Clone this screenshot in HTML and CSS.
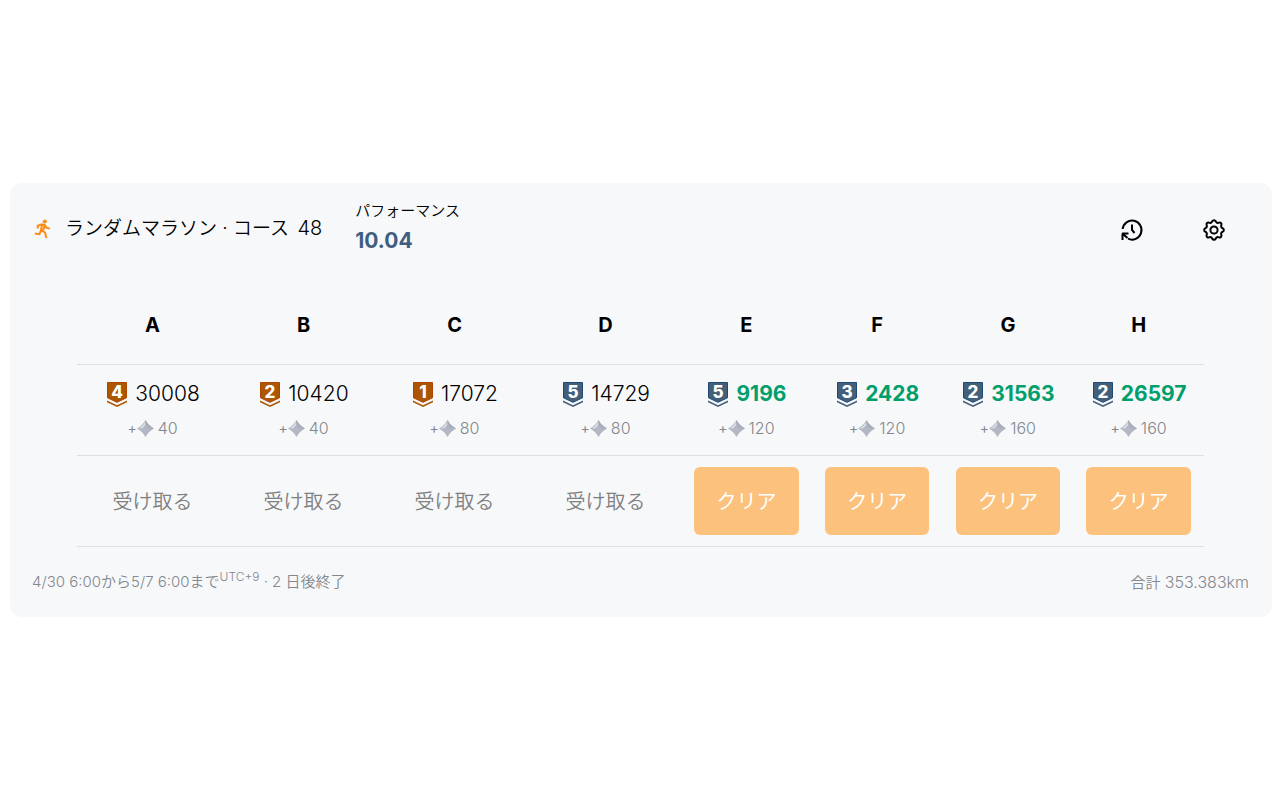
FILE: index.html
```html
<!DOCTYPE html>
<html lang="ja">
<head>
<meta charset="utf-8">
<meta name="viewport" content="width=device-width, initial-scale=1">
<title>ランダムマラソン</title>
<link rel="stylesheet" href="styles.css">
</head>
<body>
<svg class="defs" aria-hidden="true">
  <symbol id="shield" viewBox="0 0 20 25">
    <path class="shield-face" d="M.5 .5h19v15.300L10 20.300.5 15.800z"/>
    <path class="shield-chevron" d="M0 18.600l10 4.600 10-4.600v1.700L10 25 0 20.300z"/>
  </symbol>
  <symbol id="shard" viewBox="0 0 16 16">
    <path d="M8 0Q10.800 5.200 16 8 10.800 10.800 8 16 5.200 10.800 0 8 5.200 5.200 8 0z" fill="#b2b7c3"/>
    <path d="M7.500 2Q5.300 5.900 1.500 8L5 7.800 8 4.500z" fill="#dcdfe4"/>
    <path d="M8 0L8 5 11 8 16 8Q10.800 5.200 8 0z" fill="#a8adbb"/>
  </symbol>
</svg>
<main class="card">
  <header class="top">
    <h1 class="title">
      <svg class="runner" viewBox="0 0 18 20" aria-hidden="true">
        <circle cx="10.800" cy="2.400" r="2"/>
        <path d="M3.800 9.500V6.800L8 5.300l3 .7 1.300 2.600 3.600 1M8.200 6L7 10.800l4 2.700 1.400 5.500M7 11.300L5.400 15.200 .8 14.500M10.800 6.500L9.300 11"/>
      </svg>
      <span>ランダムマラソン · コース <span class="course">48</span></span>
    </h1>
    <div class="performance">
      <span class="label">パフォーマンス</span>
      <strong class="score">10.04</strong>
    </div>
    <nav class="tools">
      <button type="button" class="tool" aria-label="履歴">
        <svg viewBox="0 0 24 24"><path d="M2.600 11A9.500 9.500 0 1 1 8 20.700M12 6.500V12l2.500 3"/><path d="M2 15.500h6.500M2.500 15.500v6.500M3 16l4.500 4"/></svg>
      </button>
      <button type="button" class="tool" aria-label="設定">
        <svg viewBox="0 0 24 24"><path d="M10.300 3.200C11 1.800 13 1.800 13.700 3.200 14.300 4.800 15.600 5.300 17 4.600 18.500 4.100 19.900 5.500 19.400 7 18.700 8.400 19.200 9.700 20.800 10.300 22.200 11 22.200 13 20.800 13.700 19.200 14.300 18.700 15.600 19.400 17 19.900 18.500 18.500 19.900 17 19.400 15.600 18.700 14.300 19.200 13.700 20.800 13 22.200 11 22.200 10.300 20.800 9.700 19.200 8.400 18.700 7 19.400 5.500 19.900 4.100 18.500 4.600 17 5.300 15.600 4.800 14.300 3.200 13.700 1.800 13 1.800 11 3.200 10.300 4.800 9.700 5.300 8.400 4.600 7 4.100 5.500 5.500 4.100 7 4.600 8.400 5.300 9.700 4.800 10.300 3.200z"/><circle cx="12" cy="12" r="3.600"/></svg>
      </button>
    </nav>
  </header>

  <table class="courses">
    <colgroup><col class="wide" span="4"><col span="4"></colgroup>
    <thead>
      <tr><th scope="col">A</th><th scope="col">B</th><th scope="col">C</th><th scope="col">D</th><th scope="col">E</th><th scope="col">F</th><th scope="col">G</th><th scope="col">H</th></tr>
    </thead>
    <tbody>
      <tr>
        <td><div class="problem"><svg class="tier bronze" viewBox="0 0 20 25"><use href="#shield"/><text x="10" y="16">4</text></svg><span>30008</span></div><div class="reward"><span class="plus">+</span><svg class="shard"><use href="#shard"/></svg><span>40</span></div></td>
        <td><div class="problem"><svg class="tier bronze" viewBox="0 0 20 25"><use href="#shield"/><text x="10" y="16">2</text></svg><span>10420</span></div><div class="reward"><span class="plus">+</span><svg class="shard"><use href="#shard"/></svg><span>40</span></div></td>
        <td><div class="problem"><svg class="tier bronze" viewBox="0 0 20 25"><use href="#shield"/><text x="10" y="16">1</text></svg><span>17072</span></div><div class="reward"><span class="plus">+</span><svg class="shard"><use href="#shard"/></svg><span>80</span></div></td>
        <td><div class="problem"><svg class="tier silver" viewBox="0 0 20 25"><use href="#shield"/><text x="10" y="16">5</text></svg><span>14729</span></div><div class="reward"><span class="plus">+</span><svg class="shard"><use href="#shard"/></svg><span>80</span></div></td>
        <td><div class="problem solved"><svg class="tier silver" viewBox="0 0 20 25"><use href="#shield"/><text x="10" y="16">5</text></svg><span>9196</span></div><div class="reward"><span class="plus">+</span><svg class="shard"><use href="#shard"/></svg><span>120</span></div></td>
        <td><div class="problem solved"><svg class="tier silver" viewBox="0 0 20 25"><use href="#shield"/><text x="10" y="16">3</text></svg><span>2428</span></div><div class="reward"><span class="plus">+</span><svg class="shard"><use href="#shard"/></svg><span>120</span></div></td>
        <td><div class="problem solved"><svg class="tier silver" viewBox="0 0 20 25"><use href="#shield"/><text x="10" y="16">2</text></svg><span>31563</span></div><div class="reward"><span class="plus">+</span><svg class="shard"><use href="#shard"/></svg><span>160</span></div></td>
        <td><div class="problem solved"><svg class="tier silver" viewBox="0 0 20 25"><use href="#shield"/><text x="10" y="16">2</text></svg><span>26597</span></div><div class="reward"><span class="plus">+</span><svg class="shard"><use href="#shard"/></svg><span>160</span></div></td>
      </tr>
      <tr>
        <td><button type="button" class="action">受け取る</button></td>
        <td><button type="button" class="action">受け取る</button></td>
        <td><button type="button" class="action">受け取る</button></td>
        <td><button type="button" class="action">受け取る</button></td>
        <td><button type="button" class="action clear">クリア</button></td>
        <td><button type="button" class="action clear">クリア</button></td>
        <td><button type="button" class="action clear">クリア</button></td>
        <td><button type="button" class="action clear">クリア</button></td>
      </tr>
    </tbody>
  </table>

  <footer class="bottom">
    <span>4/30 6:00から5/7 6:00まで<sup>UTC+9</sup> · 2 日後終了</span>
    <span>合計 <span class="distance">353.383km</span></span>
  </footer>
</main>
</body>
</html>
```
FILE: styles.css
```css
* { box-sizing: border-box; }
body {
  margin: 0;
  min-height: 100vh;
  display: flex;
  align-items: center;
  padding: 0 8px 0 10px;
  background: #fff;
  color: #000;
  font-family: Inter, "Noto Sans CJK JP", sans-serif;
  font-weight: 400;
}
.defs { position: absolute; width: 0; height: 0; }
button { font: inherit; color: inherit; border: 0; background: none; padding: 0; cursor: pointer; }
.card {
  flex: 1;
  background: #f7f8fa;
  border-radius: 12px;
  padding: 16px 23px 23px 22px;
}
.top { display: flex; align-items: center; height: 60px; }
.title {
  display: flex;
  align-items: center;
  gap: 13px;
  margin: 0;
  font-size: 19px;
  line-height: 28px;
  font-weight: 350;
}
.course { font-size: 20px; margin-left: 3px; }
.runner {
  width: 18px;
  height: 20px;
  margin-left: 2px;
  fill: #ff8b13;
}
.runner path { fill: none; stroke: #ff8b13; stroke-width: 2; }
.performance { margin-left: 33px; display: flex; flex-direction: column; }
.label { font-size: 15px; line-height: 24px; font-weight: 350; }
.score { font-size: 21px; line-height: 36px; font-weight: 700; color: #3f5f80; }
.tools { margin: 2px 23px 0 auto; display: flex; gap: 58px; }
.tool { width: 24px; height: 24px; }
.tool svg { display: block; fill: none; stroke: #000; stroke-width: 2; }
.courses {
  width: calc(100% - 90px);
  margin: 27px 0 0 45px;
  border-collapse: collapse;
  table-layout: fixed;
}
.wide { width: 13.4%; }
th, td { padding: 0; text-align: center; border-bottom: 1px solid #dddfe0; }
th { height: 79px; font-size: 20px; font-weight: 700; }
td { height: 91px; }
.problem {
  display: flex;
  align-items: center;
  justify-content: center;
  gap: 8px;
  margin-top: 1px;
  padding-left: 2px;
  font-size: 21px;
  line-height: 32px;
  font-weight: 350;
}
.problem.solved { color: #009f6b; font-weight: 700; }
.tier { width: 20px; height: 25px; }
.tier text { fill: #fff; font-size: 17px; font-weight: 800; text-anchor: middle; }
.bronze { fill: #ad5600; stroke: #ad4400; }
.silver { fill: #435f7a; stroke: #1f4870; }
.tier text, .shield-chevron { stroke: none; }
.reward {
  display: flex;
  align-items: center;
  justify-content: center;
  margin: 6px 0 3px;
  font-size: 16px;
  line-height: 24px;
  font-weight: 350;
  color: #83888e;
}
.plus { font-size: 14px; font-weight: 400; }
.shard { width: 17px; height: 17px; margin-right: 4px; }
.action {
  width: 80%;
  height: 68px;
  padding-bottom: 2px;
  font-size: 20px;
  font-weight: 350;
  color: #808080;
  border-radius: 6px;
  vertical-align: middle;
}
.action.clear { background: #fcc17d; color: #fff; font-weight: 400; }
.bottom {
  display: flex;
  justify-content: space-between;
  align-items: center;
  height: 24px;
  margin-top: 23px;
  font-size: 15px;
  line-height: 24px;
  font-weight: 350;
  color: #83888e;
}
.distance { font-size: 16px; }
sup { font-size: 12px; line-height: 0; }
```
